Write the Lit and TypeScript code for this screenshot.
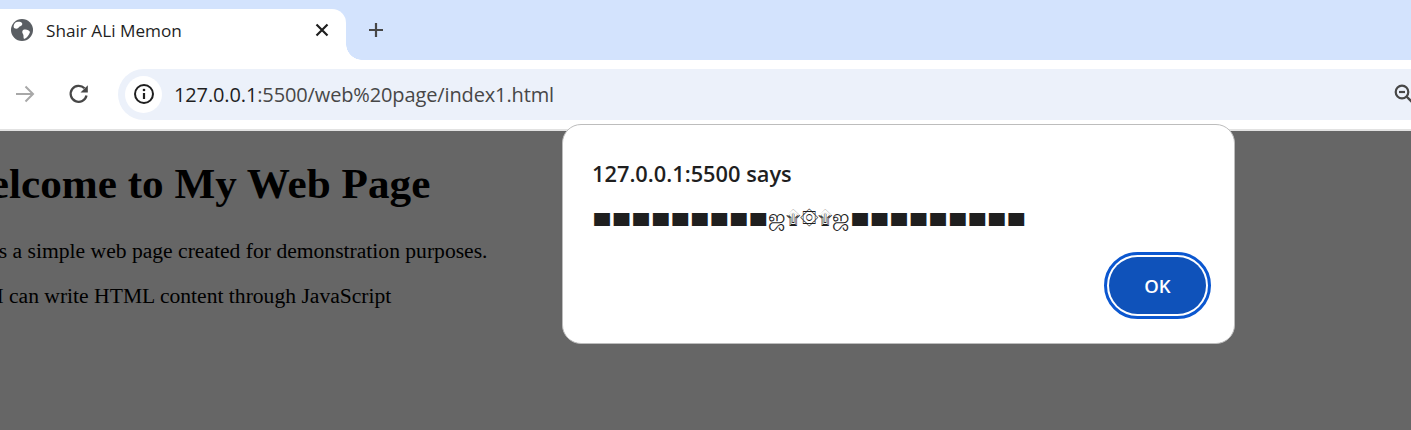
import { LitElement, html, css } from "lit";
import { customElement } from "lit/decorators.js";

const UI = css`"Open Sans", "Noto Sans", "Liberation Sans", sans-serif`;

@customElement("app-root")
export class AppRoot extends LitElement {
  static styles = css`
    :host { display: block; width: 1411px; height: 430px; position: relative; overflow: hidden; background: #666; font-family: ${UI}; }
    .strip { height: 60px; background: #d3e3fd; display: flex; align-items: flex-end; }
    .tab { width: 346px; height: 51px; box-sizing: border-box; background: #fff; border-radius: 0 14px 0 0; display: flex; align-items: center; padding: 0 16px 9px 10px; position: relative; }
    .tab::after { content: ""; position: absolute; left: 100%; bottom: 0; width: 16px; height: 16px; background: radial-gradient(circle at 100% 0, transparent 15.5px, #fff 16px); }
    .title { margin-left: 12px; font-size: 17.2px; color: #1f1f1f; flex: 1; white-space: nowrap; }
    .plus { margin-left: 21px; align-self: center; display: flex; height: 60px; align-items: center; }
    .bar { height: 69px; background: #fff; display: flex; align-items: center; box-sizing: border-box; padding-bottom: 1px; }
    .nav { display: flex; align-items: center; gap: 32px; margin-left: 14px; width: 104px; flex: none; }
    .omni { flex: 1; height: 51px; background: #ecf1fa; border-radius: 26px 0 0 26px; display: flex; align-items: center; padding: 0 7px; }
    .info { width: 37px; height: 37px; border-radius: 50%; background: #fff; display: flex; align-items: center; justify-content: center; flex: none; }
    .url { margin-left: 12px; font-size: 20px; line-height: 28px; padding-top: 1px; color: #474747; flex: 1; white-space: nowrap; letter-spacing: -0.13px; }
    .url b { font-weight: 400; color: #1f1f1f; }
    .zoom { margin-right: -10px; }
    .rule { height: 2px; background: #e2e2e2; }
    .page { font-family: "Liberation Serif", serif; color: #000; margin-left: -51px; white-space: nowrap; }
    h1 { margin: 0; padding-top: 26px; font-size: 43.2px; line-height: 54px; font-weight: 700; }
    p { margin: 0; font-size: 21.6px; line-height: 26px; }
    .p1 { margin-top: 27px; }
    .p2 { margin-top: 19px; }
    .dialog { position: absolute; left: 562px; top: 124px; width: 673px; height: 220px; box-sizing: border-box; background: #fff; border: 1px solid #bdbdbd; border-radius: 19px; padding: 34px 24px 0 29px; }
    .head { font-size: 21.8px; font-weight: 600; line-height: 30px; color: #1f1f1f; }
    .msg { margin-top: 15px; font-size: 19px; line-height: 26px; height: 26px; color: #1f1f1f; font-family: "DejaVu Sans", "Noto Sans", sans-serif; white-space: nowrap; }
    .sq { display: inline-block; font-size: 20.7px; transform: scaleY(0.82) translateY(1px); }
    .ja { font-size: 21px; }
    .actions { display: flex; justify-content: flex-end; margin-top: 21px; }
    .ok { width: 97px; height: 57px; border-radius: 29px; box-sizing: border-box; border: none; background: #0f52ba; color: #fff; font: 600 18.5px ${UI}; outline: 3.3px solid #0b57d0; outline-offset: 2.4px; margin: 6px 4px 0 0; padding: 0; }
  `;

  render() {
    return html`
      <div class="strip">
        <div class="tab">
          <svg width="24" height="24" viewBox="0 0 24 24"><circle cx="12" cy="12" r="11" fill="#5a5e63"/><path d="M5 5c3-2 6-1 7 0 1 2-1 3-3 4-1 2-3 2-5 1-1-2 0-4 1-5zM13 12c3-1 6 0 7 2-1 3-3 6-6 7-1-2 0-3-1-5-1-1-1-3 0-4z" fill="#fff"/></svg>
          <span class="title">Shair ALi Memon</span>
          <svg width="16" height="16" viewBox="0 0 16 16"><path d="M2.5 2.5l11 11M13.5 2.5l-11 11" stroke="#1f1f1f" stroke-width="2.2" fill="none"/></svg>
        </div>
        <div class="plus"><svg width="18" height="18" viewBox="0 0 18 18"><path d="M9 2v14M2 9h14" stroke="#474747" stroke-width="2.2" fill="none"/></svg></div>
      </div>
      <div class="bar">
        <div class="nav">
          <svg width="22" height="22" viewBox="0 0 22 22"><path d="M2 11h17M11.5 3.5L19 11l-7.5 7.5" stroke="#a8a8a8" stroke-width="2" fill="none"/></svg>
          <svg width="22" height="22" viewBox="0 0 22 22"><path d="M18.5 12.5a8 8 0 1 1-2-7.2" stroke="#474747" stroke-width="2.3" fill="none"/><path d="M19.8 2.2v7.3h-7.3z" fill="#474747"/></svg>
        </div>
        <div class="omni">
          <div class="info"><svg width="22" height="22" viewBox="0 0 22 22"><circle cx="11" cy="11" r="9" stroke="#1f1f1f" stroke-width="2" fill="none"/><path d="M11 10v6" stroke="#1f1f1f" stroke-width="2.2"/><circle cx="11" cy="7" r="1.3" fill="#1f1f1f"/></svg></div>
          <span class="url"><b>127.0.0.1</b>:5500/web%20page/index1.html</span>
          <svg class="zoom" width="20" height="22" viewBox="0 0 20 22"><circle cx="8" cy="9" r="6.3" stroke="#474747" stroke-width="2.2" fill="none"/><path d="M5 9h6" stroke="#474747" stroke-width="2.2"/><path d="M12.5 13.5L20 21" stroke="#474747" stroke-width="2.4"/></svg>
        </div>
      </div>
      <div class="rule"></div>
      <div class="page">
        <h1>Welcome to My Web Page</h1>
        <p class="p1">This is a simple web page created for demonstration purposes.</p>
        <p class="p2">Now I can write HTML content through JavaScript</p>
      </div>
      <div class="dialog">
        <div class="head">127.0.0.1:5500 says</div>
        <div class="msg"><span class="sq">■■■■■■■■■</span><span class="ja">ஜ</span>۩۞۩<span class="ja">ஜ</span><span class="sq">■■■■■■■■■</span></div>
        <div class="actions"><button class="ok">OK</button></div>
      </div>
    `;
  }
}
